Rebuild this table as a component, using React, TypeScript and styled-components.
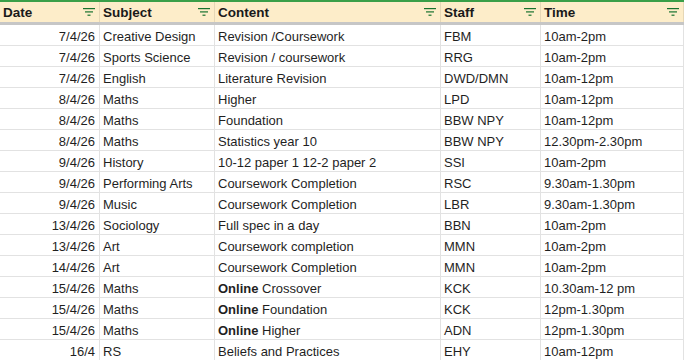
import React from 'react';
import styled, { createGlobalStyle } from 'styled-components';

const GlobalStyle = createGlobalStyle`
  body {
    margin: 0;
    background: #ffffff;
    font-family: "Liberation Sans", Arial, sans-serif;
  }
`;

const COLUMNS = '100px 115px 226px 100px 1fr';

const Sheet = styled.div`
  width: 684px;
  height: 360px;
  overflow: hidden;
  background: #ffffff;
  color: #1f1f1f;
  font-size: 13px;
`;

const HeaderRow = styled.div`
  display: grid;
  grid-template-columns: ${COLUMNS};
  height: 20px;
  border-top: 2px solid #3a9f48;
  border-bottom: 3px solid #c6c6c6;
  background: #fdedc9;
`;

const HeaderCell = styled.div`
  display: flex;
  align-items: center;
  justify-content: space-between;
  padding: 0 4px 0 3px;
  border-right: 1px solid #e6d7b6;
  font-weight: bold;
  font-size: 13.5px;
  color: #1a1a1a;
`;

const Row = styled.div`
  display: grid;
  grid-template-columns: ${COLUMNS};
  height: 20px;
  border-bottom: 1px solid #e2e2e2;
`;

const Cell = styled.div<{ $right?: boolean }>`
  display: flex;
  align-items: center;
  justify-content: ${(p) => (p.$right ? 'flex-end' : 'flex-start')};
  padding: 2px 4px 0 3px;
  border-right: 1px solid #e2e2e2;
  white-space: nowrap;
  overflow: hidden;
`;

const FilterIcon = () => (
  <svg width="12" height="8" viewBox="0 0 12 8">
    <rect x="0" y="0" width="12" height="1.2" fill="#17732e" />
    <rect x="2" y="3.3" width="8" height="1.2" fill="#17732e" />
    <rect x="4.5" y="6.6" width="3" height="1.2" fill="#17732e" />
  </svg>
);

type Entry = {
  date: string;
  subject: string;
  online?: boolean;
  content: string;
  staff: string;
  time: string;
};

const rows: Entry[] = [
  { date: '7/4/26', subject: 'Creative Design', content: 'Revision /Coursework', staff: 'FBM', time: '10am-2pm' },
  { date: '7/4/26', subject: 'Sports Science', content: 'Revision / coursework', staff: 'RRG', time: '10am-2pm' },
  { date: '7/4/26', subject: 'English', content: 'Literature Revision', staff: 'DWD/DMN', time: '10am-12pm' },
  { date: '8/4/26', subject: 'Maths', content: 'Higher', staff: 'LPD', time: '10am-12pm' },
  { date: '8/4/26', subject: 'Maths', content: 'Foundation', staff: 'BBW NPY', time: '10am-12pm' },
  { date: '8/4/26', subject: 'Maths', content: 'Statistics year 10', staff: 'BBW NPY', time: '12.30pm-2.30pm' },
  { date: '9/4/26', subject: 'History', content: '10-12 paper 1 12-2 paper 2', staff: 'SSI', time: '10am-2pm' },
  { date: '9/4/26', subject: 'Performing Arts', content: 'Coursework Completion', staff: 'RSC', time: '9.30am-1.30pm' },
  { date: '9/4/26', subject: 'Music', content: 'Coursework Completion', staff: 'LBR', time: '9.30am-1.30pm' },
  { date: '13/4/26', subject: 'Sociology', content: 'Full spec in a day', staff: 'BBN', time: '10am-2pm' },
  { date: '13/4/26', subject: 'Art', content: 'Coursework completion', staff: 'MMN', time: '10am-2pm' },
  { date: '14/4/26', subject: 'Art', content: 'Coursework Completion', staff: 'MMN', time: '10am-2pm' },
  { date: '15/4/26', subject: 'Maths', online: true, content: 'Crossover', staff: 'KCK', time: '10.30am-12 pm' },
  { date: '15/4/26', subject: 'Maths', online: true, content: 'Foundation', staff: 'KCK', time: '12pm-1.30pm' },
  { date: '15/4/26', subject: 'Maths', online: true, content: 'Higher', staff: 'ADN', time: '12pm-1.30pm' },
  { date: '16/4', subject: 'RS', content: 'Beliefs and Practices', staff: 'EHY', time: '10am-12pm' },
];

const headers = ['Date', 'Subject', 'Content', 'Staff', 'Time'];

const App: React.FC = () => (
  <>
    <GlobalStyle />
    <Sheet>
      <HeaderRow>
        {headers.map((h) => (
          <HeaderCell key={h}>
            <span>{h}</span>
            <FilterIcon />
          </HeaderCell>
        ))}
      </HeaderRow>
      {rows.map((r, i) => (
        <Row key={i}>
          <Cell $right>{r.date}</Cell>
          <Cell>{r.subject}</Cell>
          <Cell>
            {r.online && <b>Online&nbsp;</b>}
            {r.content}
          </Cell>
          <Cell>{r.staff}</Cell>
          <Cell>{r.time}</Cell>
        </Row>
      ))}
    </Sheet>
  </>
);

export default App;
